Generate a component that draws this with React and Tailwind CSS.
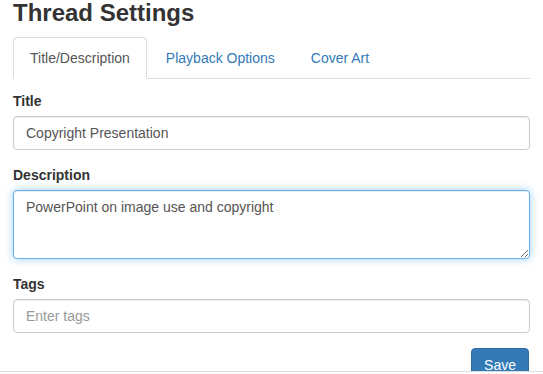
import React from 'react';

const tabs = ['Title/Description', 'Playback Options', 'Cover Art'];

function Field({ label, children }) {
  return (
    <div className="mb-[15px]">
      <label className="block mb-[5px] text-[14px] leading-[20px] font-bold text-[#333]">{label}</label>
      {children}
    </div>
  );
}

export default function App() {
  return (
    <div className="h-[374px] bg-white font-['Liberation_Sans',Arial,sans-serif] text-[14px] text-[#333]">
      <div className="h-[372px] overflow-hidden border-b border-[#ddd] px-[13px]">
        <h1 className="text-[24px] leading-[26px] font-bold text-[#333]">Thread Settings</h1>

        <ul className="mt-[11px] flex border-b border-[#ddd]">
          {tabs.map((t, i) => (
            <li key={t} className="-mb-px mr-[2px]">
              {i === 0 ? (
                <span className="block px-[16px] py-[10px] leading-[20px] text-[#555] bg-white border border-[#ddd] border-b-transparent rounded-t-[4px]">
                  {t}
                </span>
              ) : (
                <a href="#" className="block px-[16px] py-[10px] leading-[20px] text-[#337ab7] border border-transparent">
                  {t}
                </a>
              )}
            </li>
          ))}
        </ul>

        <form className="mt-[12px]" onSubmit={(e) => e.preventDefault()}>
          <Field label="Title">
            <input
              type="text"
              defaultValue="Copyright Presentation"
              className="block w-full h-[34px] px-[12px] py-[6px] text-[14px] leading-[20px] text-[#555] bg-white border border-[#ccc] rounded-[4px] shadow-[inset_0_1px_1px_rgba(0,0,0,0.075)] outline-none"
            />
          </Field>
          <Field label="Description">
            <textarea
              defaultValue="PowerPoint on image use and copyright"
              className="block w-full h-[69px] px-[12px] py-[6px] text-[14px] leading-[20px] text-[#555] bg-white border border-[#66afe9] rounded-[4px] shadow-[inset_0_1px_1px_rgba(0,0,0,0.075),0_0_8px_rgba(102,175,233,0.6)] outline-none resize-y"
            />
          </Field>
          <Field label="Tags">
            <input
              type="text"
              placeholder="Enter tags"
              className="block w-full h-[34px] px-[12px] py-[6px] text-[14px] leading-[20px] text-[#555] placeholder:text-[#999] bg-white border border-[#ccc] rounded-[4px] shadow-[inset_0_1px_1px_rgba(0,0,0,0.075)] outline-none"
            />
          </Field>
          <div className="flex justify-end pr-px">
            <button
              type="submit"
              className="px-[12px] py-[6px] text-[14px] leading-[20px] text-white bg-[#337ab7] border border-[#2e6da4] rounded-[4px]"
            >
              Save
            </button>
          </div>
        </form>
      </div>
    </div>
  );
}
